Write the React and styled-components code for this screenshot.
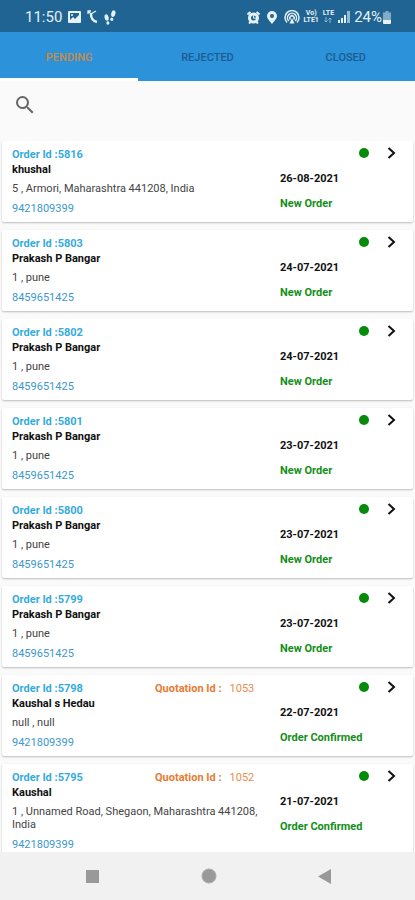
import React, { useState } from "react";
import styled, { createGlobalStyle } from "styled-components";

const GlobalStyle = createGlobalStyle`
  * {
    box-sizing: border-box;
  }
  body {
    margin: 0;
    background-color: #fafafa;
    font-family: Roboto, sans-serif;
    font-size: 11px;
    color: #111;
  }
  button {
    border: 0;
    padding: 0;
    background: none;
    font-family: inherit;
    cursor: pointer;
  }
`;

const Wrapper = styled.div`
  display: flex;
  flex-direction: column;
  height: 100vh;
`;

const StatusBar = styled.div`
  display: flex;
  flex-shrink: 0;
  align-items: center;
  justify-content: space-between;
  height: 32px;
  padding: 2px 24px 0 25px;
  background-color: #1f6492;
  color: #e6f1f8;
`;

const StatusGroup = styled.div`
  display: flex;
  align-items: center;
  gap: ${(props) => props.$gap}px;
`;

const StatusText = styled.span`
  font-size: 15px;
  line-height: 20px;
`;

const NetworkText = styled.span`
  font-size: 7px;
  font-weight: 700;
  line-height: 7px;
  text-align: center;
`;

const Tabs = styled.div`
  display: grid;
  flex-shrink: 0;
  grid-template-columns: repeat(3, 1fr);
  height: 49px;
  background-color: #2c92da;
`;

const Tab = styled.button`
  padding-top: 4px;
  border-bottom: 3px solid ${(props) => (props.$active ? "white" : "#2c92da")};
  font-size: 11px;
  font-weight: 500;
  color: ${(props) => (props.$active ? "#c98b45" : "#1b5c8f")};
`;

const SearchBar = styled.div`
  display: flex;
  flex-shrink: 0;
  align-items: center;
  height: 60px;
  padding: 0 13px 12px;
`;

const IconButton = styled.button`
  display: flex;
`;

const OrderList = styled.main`
  display: flex;
  flex: 1;
  flex-direction: column;
  gap: 8px;
  min-height: 0;
  padding: 0 2px;
  overflow-y: auto;
  scrollbar-width: none;
`;

const Card = styled.article`
  display: grid;
  flex-shrink: 0;
  grid-template-columns: 1fr 133px;
  padding: 6px 0 6px 10px;
  border-radius: 2px;
  background-color: white;
  box-shadow: 0 1px 2px rgba(0, 0, 0, 0.25);
`;

const CardHead = styled.div`
  display: grid;
  grid-template-columns: 143px 1fr;
`;

const OrderId = styled.div`
  font-weight: 700;
  line-height: 15px;
  color: #35abdc;
`;

const Quotation = styled.div`
  display: flex;
  gap: 8px;
  line-height: 15px;
  color: #ea8b4b;
`;

const QuotationLabel = styled.span`
  font-weight: 700;
  color: #e87b32;
`;

const Name = styled.div`
  font-weight: 700;
  line-height: 15px;
`;

const Address = styled.div`
  margin: 5px 16px 6px 0;
  line-height: 13px;
  color: #444;
`;

const Phone = styled.a`
  display: block;
  line-height: 15px;
  color: #3d98cc;
  text-decoration: none;
`;

const Marks = styled.div`
  display: flex;
  align-items: center;
  justify-content: flex-end;
  gap: 18px;
  height: 12px;
  margin-bottom: 12px;
  padding-right: 17px;
`;

const Dot = styled.span`
  width: 10px;
  height: 10px;
  border-radius: 50%;
  background-color: #068a0a;
`;

const OrderDate = styled.div`
  margin-bottom: 10px;
  font-weight: 700;
  line-height: 15px;
`;

const OrderStatus = styled.div`
  font-weight: 700;
  line-height: 15px;
  color: #128f16;
`;

const NavBar = styled.nav`
  display: grid;
  flex-shrink: 0;
  grid-template-columns: repeat(3, 116px);
  align-items: center;
  justify-content: center;
  height: 48px;
  padding-left: 2px;
  background-color: #f1f1f1;
`;

const NavButton = styled.button`
  display: flex;
  justify-content: center;
`;

const tabs = ["PENDING", "REJECTED", "CLOSED"];

const pune = { name: "Prakash P Bangar", address: "1 , pune", phone: "8459651425", status: "New Order" };

const orders = [
  {
    id: 5816,
    name: "khushal",
    address: "5 , Armori, Maharashtra 441208, India",
    phone: "9421809399",
    date: "26-08-2021",
    status: "New Order",
  },
  { ...pune, id: 5803, date: "24-07-2021" },
  { ...pune, id: 5802, date: "24-07-2021" },
  { ...pune, id: 5801, date: "23-07-2021" },
  { ...pune, id: 5800, date: "23-07-2021" },
  { ...pune, id: 5799, date: "23-07-2021" },
  {
    id: 5798,
    quotation: 1053,
    name: "Kaushal s Hedau",
    address: "null , null",
    phone: "9421809399",
    date: "22-07-2021",
    status: "Order Confirmed",
  },
  {
    id: 5795,
    quotation: 1052,
    name: "Kaushal",
    address: "1 , Unnamed Road, Shegaon, Maharashtra 441208, India",
    phone: "9421809399",
    date: "21-07-2021",
    status: "Order Confirmed",
  },
];

const PictureIcon = () => (
  <svg width="13" height="12" viewBox="0 0 13 12">
    <path
      fill="currentColor"
      fillRule="evenodd"
      d="M1 0h11a1 1 0 0 1 1 1v10a1 1 0 0 1-1 1H1a1 1 0 0 1-1-1V1a1 1 0 0 1 1-1zm1 2v7l3-3 2 2 4-4V2z"
    />
    <circle cx="4" cy="4" r="1" fill="currentColor" />
  </svg>
);

const MissedIcon = () => (
  <svg width="11" height="14" viewBox="0 0 11 14" fill="none" stroke="currentColor">
    <path d="M1 1l3 3M1 4V1h3M4 4l5-3" strokeWidth="1.3" />
    <path d="M4 4c0 4 2 7 6 8" strokeWidth="2.4" />
  </svg>
);

const StepsIcon = () => (
  <svg width="12" height="15" viewBox="0 0 12 15" fill="currentColor">
    <ellipse cx="2.6" cy="7.5" rx="2" ry="3.4" transform="rotate(-12 2.6 7.5)" />
    <ellipse cx="3.9" cy="13" rx="1.5" ry="1.7" />
    <ellipse cx="9.3" cy="3.6" rx="2.1" ry="3.5" transform="rotate(12 9.3 3.6)" />
    <ellipse cx="7.8" cy="9.3" rx="1.5" ry="1.8" />
  </svg>
);

const AlarmIcon = () => (
  <svg width="13" height="13" viewBox="0 0 13 13">
    <path d="M0.5 3.5L3.5 1M12.5 3.5L9.5 1M2 12.5L4 10.5M11 12.5L9 10.5" stroke="currentColor" strokeWidth="2" />
    <circle cx="6.5" cy="7" r="4" fill="none" stroke="currentColor" strokeWidth="3" />
    <path d="M6.5 4.5V7.2H9" fill="none" stroke="currentColor" />
  </svg>
);

const PinIcon = () => (
  <svg width="10" height="13" viewBox="0 0 10 13">
    <path
      fill="currentColor"
      fillRule="evenodd"
      d="M5 0a5 5 0 0 1 5 5c0 3-3 5-5 8-2-3-5-5-5-8a5 5 0 0 1 5-5zm0 3a2 2 0 1 0 0 4 2 2 0 0 0 0-4z"
    />
  </svg>
);

const HotspotIcon = () => (
  <svg width="16" height="14" viewBox="0 0 16 14" fill="none" stroke="currentColor" strokeWidth="1.5">
    <path d="M3 12.5a7 7 0 1 1 10 0" />
    <path d="M4.8 11a4.5 4.5 0 1 1 6.4 0" />
    <path d="M6.4 9.5a2.2 2.2 0 1 1 3.2 0" />
    <path d="M8 8l-2.5 5.5h5z" fill="currentColor" stroke="none" />
  </svg>
);

const ArrowsIcon = () => (
  <svg width="8" height="6" viewBox="0 0 8 6" fill="none" stroke="currentColor" opacity="0.6">
    <path d="M2 0v5M0.5 3.5L2 5l1.5-1.5M6 6V1M4.5 2.5L6 1l1.5 1.5" />
  </svg>
);

const SignalIcon = () => (
  <svg width="12" height="12" viewBox="0 0 12 12" fill="currentColor">
    <path d="M0 9h2v3H0zM3 7h2v5H3zM6 4h2v8H6z" />
    <path d="M9 0h3v12H9z" opacity="0.6" />
  </svg>
);

const BatteryIcon = () => (
  <svg width="8" height="13" viewBox="0 0 8 13" fill="currentColor">
    <path d="M2.5 0h3v1.5H8V9H0V1.5h2.5z" opacity="0.5" />
    <path d="M0 9h8v3a1 1 0 0 1-1 1H1a1 1 0 0 1-1-1z" />
  </svg>
);

const SearchIcon = () => (
  <svg width="24" height="24" viewBox="0 0 24 24" fill="#666">
    <path d="M15.5 14h-.79l-.28-.27A6.471 6.471 0 0 0 16 9.5 6.5 6.5 0 1 0 9.5 16c1.61 0 3.09-.59 4.23-1.57l.27.28v.79l5 4.99L20.49 19l-4.99-5zm-6 0C7.01 14 5 11.99 5 9.5S7.01 5 9.5 5 14 7.01 14 9.5 11.99 14 9.5 14z" />
  </svg>
);

const ChevronIcon = () => (
  <svg width="9" height="12" viewBox="0 0 9 12" fill="none" stroke="#111" strokeWidth="2">
    <path d="M1.5 1L7 6l-5.5 5" />
  </svg>
);

const Order = ({ id, quotation, name, address, phone, date, status }) => {
  return (
    <Card>
      <div>
        <CardHead>
          <OrderId>Order Id :{id}</OrderId>
          {quotation && (
            <Quotation>
              <QuotationLabel>Quotation Id :</QuotationLabel>
              <span>{quotation}</span>
            </Quotation>
          )}
        </CardHead>
        <Name>{name}</Name>
        <Address>{address}</Address>
        <Phone href={`tel:${phone}`}>{phone}</Phone>
      </div>
      <div>
        <Marks>
          <Dot />
          <IconButton aria-label={`Open order ${id}`}>
            <ChevronIcon />
          </IconButton>
        </Marks>
        <OrderDate>{date}</OrderDate>
        <OrderStatus>{status}</OrderStatus>
      </div>
    </Card>
  );
};

const App = () => {
  const [active, setActive] = useState("PENDING");

  return (
    <Wrapper>
      <GlobalStyle />
      <StatusBar>
        <StatusGroup $gap={6}>
          <StatusText>11:50</StatusText>
          <PictureIcon />
          <MissedIcon />
          <StepsIcon />
        </StatusGroup>
        <StatusGroup $gap={4}>
          <StatusGroup $gap={7}>
            <AlarmIcon />
            <PinIcon />
            <HotspotIcon />
          </StatusGroup>
          <NetworkText>
            Vo)
            <br />
            LTE1
          </NetworkText>
          <NetworkText>
            LTE
            <br />
            <ArrowsIcon />
          </NetworkText>
          <SignalIcon />
          <StatusGroup $gap={1}>
            <StatusText>24%</StatusText>
            <BatteryIcon />
          </StatusGroup>
        </StatusGroup>
      </StatusBar>
      <Tabs role="tablist">
        {tabs.map((tab) => (
          <Tab
            key={tab}
            role="tab"
            aria-selected={tab === active}
            $active={tab === active}
            onClick={() => setActive(tab)}
          >
            {tab}
          </Tab>
        ))}
      </Tabs>
      <SearchBar>
        <IconButton aria-label="Search">
          <SearchIcon />
        </IconButton>
      </SearchBar>
      <OrderList>
        {orders.map((order) => (
          <Order key={order.id} {...order} />
        ))}
      </OrderList>
      <NavBar>
        <NavButton aria-label="Recent apps">
          <svg width="13" height="13" viewBox="0 0 13 13">
            <rect width="13" height="13" fill="#999" />
          </svg>
        </NavButton>
        <NavButton aria-label="Home">
          <svg width="16" height="16" viewBox="0 0 16 16">
            <circle cx="8" cy="8" r="7" fill="#999" stroke="#aaa" />
          </svg>
        </NavButton>
        <NavButton aria-label="Back">
          <svg width="13" height="15" viewBox="0 0 13 15">
            <path d="M13 0v15L0 7.5z" fill="#999" />
          </svg>
        </NavButton>
      </NavBar>
    </Wrapper>
  );
};

export default App;
